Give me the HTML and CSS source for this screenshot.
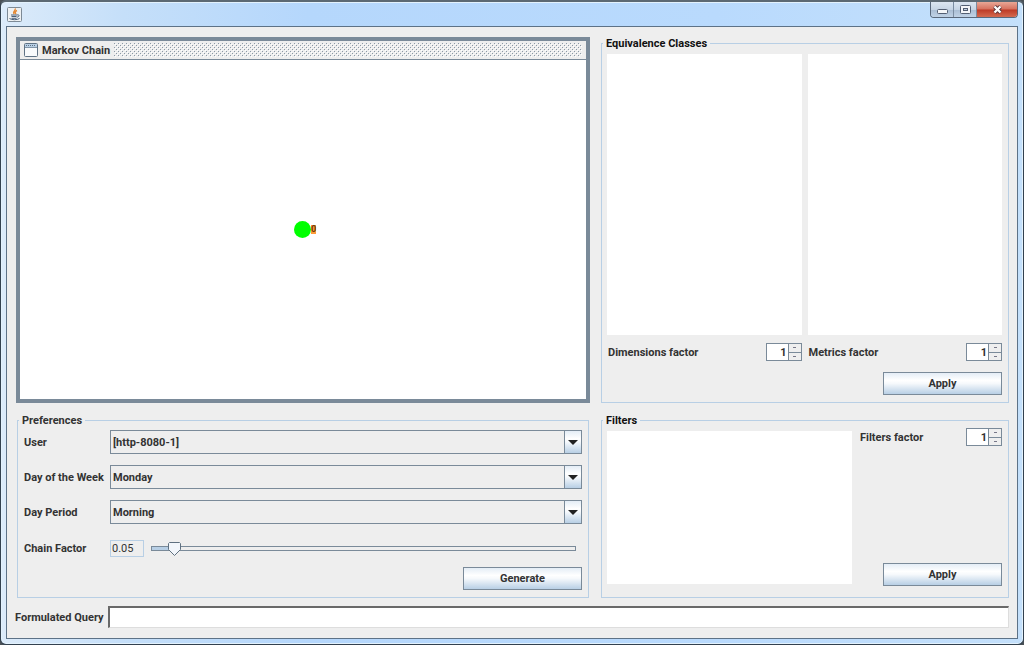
FILE: index.html
```html
<!DOCTYPE html>
<html lang="en">
<head>
<meta charset="utf-8">
<title>Markov Chain</title>
<link rel="stylesheet" href="styles.css">
</head>
<body>
<div class="window">
  <header class="titlebar">
    <svg class="java-icon" width="15" height="15" viewBox="0 0 15 15" aria-hidden="true">
      <rect x=".5" y=".5" width="14" height="14" rx="1" fill="#eef1f3" stroke="#7d8a96"/>
      <path d="M8 1.500c1.500 1.500-3 3-.8 5.500M10 3.500c-2.500 1.200-2 2.200-1 3.500" fill="none" stroke="#e58a35" stroke-width="1.400"/>
      <path d="M4 8h6M4.500 9.500h5" fill="none" stroke="#4c6078" stroke-width="1.200"/>
      <path d="M10 8c3-.8 2.500 2-.2 2.200M2.500 11.500c2 1.600 8 1.600 10 0M4.500 11.300h5" fill="none" stroke="#4c6078"/>
    </svg>
    <div class="window-buttons">
      <button class="win-btn" type="button" aria-label="Minimize"><svg class="minimize" width="11" height="5" viewBox="0 0 11 5"><rect x=".5" y=".5" width="10" height="4" rx="1" fill="#f4f6f9" stroke="#535f73"/></svg></button>
      <button class="win-btn" type="button" aria-label="Maximize"><svg width="11" height="9" viewBox="0 0 11 9"><rect x=".5" y=".5" width="10" height="8" rx="1" fill="#f4f6f9" stroke="#535f73"/><rect x="3.500" y="3.500" width="4" height="2" fill="#c3d0e0" stroke="#535f73"/></svg></button>
      <button class="win-btn win-close" type="button" aria-label="Close"><svg width="11" height="9" viewBox="0 0 11 9"><path d="M2.500 1.500l6 6M8.500 1.500l-6 6" stroke="#59353a" stroke-width="4"/><path d="M2.500 1.500l6 6M8.500 1.500l-6 6" stroke="#fff" stroke-width="2.300"/></svg></button>
    </div>
  </header>
  <main class="client">
    <div class="panels">
      <section class="chain">
        <div class="chain-title">
          <svg width="14" height="14" viewBox="0 0 14 14" aria-hidden="true"><rect x=".5" y=".5" width="13" height="13" rx="1" fill="#f8fafc" stroke="#5f7285"/><rect x="1" y="1" width="12" height="3" fill="#b8cfe5"/><path d="M2 2.500h10" stroke="#5f7285" stroke-dasharray="1 1"/><path d="M1 4.500h12" stroke="#8295a8"/></svg>
          <span>Markov Chain</span>
          <div class="grip"></div>
        </div>
        <div class="canvas"><div class="node"><span class="dot"></span><span class="node-label">0</span></div></div>
      </section>

      <fieldset class="group classes">
        <legend>Equivalence Classes</legend>
        <div class="class-columns">
          <div class="class-column">
            <div class="list"></div>
            <div class="factor">
              <label for="dim">Dimensions factor</label>
              <div class="spinner"><input id="dim" type="text" value="1"><div class="steps"><button type="button" aria-label="Increase"></button><button type="button" aria-label="Decrease"></button></div></div>
            </div>
          </div>
          <div class="class-column">
            <div class="list"></div>
            <div class="factor">
              <label for="met">Metrics factor</label>
              <div class="spinner"><input id="met" type="text" value="1"><div class="steps"><button type="button" aria-label="Increase"></button><button type="button" aria-label="Decrease"></button></div></div>
            </div>
          </div>
        </div>
        <button class="btn" type="button">Apply</button>
      </fieldset>

      <fieldset class="group prefs">
        <legend>Preferences</legend>
        <div class="pref-rows">
          <label for="user">User</label>
          <select id="user"><option>[http-8080-1]</option></select>
          <label for="day">Day of the Week</label>
          <select id="day"><option>Monday</option></select>
          <label for="period">Day Period</label>
          <select id="period"><option>Morning</option></select>
          <label for="chain">Chain Factor</label>
          <div class="chain-factor">
            <input class="value" type="text" value="0.05" readonly aria-label="Chain factor value">
            <input class="slider" id="chain" type="range" min="0" max="100" value="4">
          </div>
        </div>
        <button class="btn" type="button">Generate</button>
      </fieldset>

      <fieldset class="group filters">
        <legend>Filters</legend>
        <div class="filter-body">
          <div class="list"></div>
          <div class="filter-side">
            <div class="factor">
              <label for="fil">Filters factor</label>
              <div class="spinner"><input id="fil" type="text" value="1"><div class="steps"><button type="button" aria-label="Increase"></button><button type="button" aria-label="Decrease"></button></div></div>
            </div>
            <button class="btn" type="button">Apply</button>
          </div>
        </div>
      </fieldset>
    </div>
    <div class="query">
      <label for="query">Formulated Query</label>
      <input id="query" type="text">
    </div>
  </main>
</div>
</body>
</html>
```
FILE: styles.css
```css
* { box-sizing: border-box; }

body {
  margin: 0;
  background: #4a5157;
  font: bold 11px/13px Roboto, "Liberation Sans", Arial, sans-serif;
  color: #333;
}

button, input, select { font: inherit; color: inherit; border-radius: 0; }
label { white-space: nowrap; }

.window {
  display: flex;
  flex-direction: column;
  min-height: 100vh;
  padding: 0 5px 5px;
  border: 1px solid #33414f;
  border-top: 2px solid #5c6973;
  border-radius: 6px;
  background: linear-gradient(90deg, #dcebfa 0, #c5dff9 12%, #b5d7fc 30%, #b9dafd 70%, #c4e0fb 100%);
  box-shadow: inset 0 0 0 1px #e3f2fd;
}

.titlebar {
  display: flex;
  justify-content: space-between;
  align-items: flex-start;
  height: 24px;
  padding-left: 1px;
}
.java-icon { margin-top: 5px; }

.window-buttons {
  display: flex;
  border: 1px solid #59687b;
  border-top: 0;
  border-radius: 0 0 4px 4px;
  overflow: hidden;
}
.win-btn {
  display: flex;
  align-items: center;
  justify-content: center;
  width: 23px;
  height: 15px;
  padding: 0;
  border: 0;
  border-right: 1px solid #7b8da2;
  background: linear-gradient(#dce6f1 0, #c6d4e4 50%, #a9bdd3 51%, #c0d2e6 100%);
}
.minimize { margin-top: 4px; }
.win-close {
  width: 40px;
  border-right: 0;
  background: linear-gradient(#e9a796 0, #d6705d 48%, #bd3a26 52%, #d46a50 100%);
}

.client {
  flex: 1;
  display: flex;
  flex-direction: column;
  gap: 8px;
  padding: 10px 8px 10px;
  border: 1px solid #5d7287;
  background: #eee;
}

.panels {
  flex: 1;
  display: grid;
  grid-template-columns: minmax(0, 574fr) minmax(0, 408fr);
  grid-template-rows: minmax(0, 366fr) minmax(0, 184fr);
  gap: 11px;
  padding-left: 1px;
}

.chain {
  display: flex;
  flex-direction: column;
  border: 4px solid #7a8a99;
}
.chain-title {
  display: flex;
  align-items: center;
  gap: 4px;
  height: 19px;
  padding: 0 4px;
  border-bottom: 1px solid #7a8a99;
}
.grip {
  flex: 1;
  height: 14px;
  background: url("data:image/svg+xml,%3Csvg xmlns='http://www.w3.org/2000/svg' width='4' height='4'%3E%3Cpath d='M0 0h1v1h-1zM2 2h1v1h-1z' fill='%238c99a6'/%3E%3Cpath d='M1 1h1v1h-1zM3 3h1v1h-1z' fill='%23fff'/%3E%3C/svg%3E");
}
.canvas {
  flex: 1;
  display: flex;
  align-items: center;
  justify-content: center;
  background: #fff;
}
.node { display: flex; align-items: center; padding-left: 4px; }
.dot { width: 17px; height: 17px; border-radius: 50%; background: #0f0; }
.node-label {
  width: 5px;
  font-size: 9px;
  line-height: 9px;
  background: #ff9c38;
  color: #6b3a10;
}

.group {
  display: flex;
  flex-direction: column;
  min-width: 0;
  margin: 0;
  padding: 4px 6px 7px 5px;
  border: 1px solid #b8cfe5;
}
.group legend { margin-left: -4px; padding: 0 3px; color: #111; }
.list { background: #fff; }

.class-columns { flex: 1; display: flex; gap: 6px; }
.class-column { flex: 1; display: flex; flex-direction: column; gap: 8px; }
.class-column .list { flex: 1; }
.factor { display: flex; justify-content: space-between; align-items: center; }
.class-column .factor { padding-left: 1px; }

.spinner {
  display: flex;
  width: 36px;
  height: 18px;
  border: 1px solid #7a8a99;
}
.spinner input {
  flex: 1;
  min-width: 0;
  padding: 0 1px 0 0;
  border: 0;
  background: #fff;
  text-align: right;
}
.steps { display: flex; flex-direction: column; width: 13px; border-left: 1px solid #7a8a99; }
.steps button {
  flex: 1;
  display: flex;
  align-items: center;
  justify-content: center;
  padding: 0;
  border: 0;
  background: #eee;
}
.steps button + button { border-top: 1px solid #7a8a99; }
.steps button::before { content: ""; width: 3px; height: 1px; background: #778; }

.btn {
  align-self: flex-end;
  width: 119px;
  height: 23px;
  padding: 0;
  border: 1px solid #7a8a99;
  background: linear-gradient(#e4edf6 0, #fff 35%, #f6f9fc 50%, #b8cfe5 100%);
}
.classes .btn { margin-top: 11px; }

.prefs { margin: 0 1px; padding: 3px 6px 7px; justify-content: space-between; }
.prefs legend { margin-left: -5px; color: #333; }
.pref-rows {
  display: grid;
  grid-template-columns: 80px minmax(0, 1fr);
  column-gap: 6px;
  row-gap: 11px;
  align-items: center;
}
select {
  appearance: none;
  width: 100%;
  height: 24px;
  padding: 0 20px 0 2px;
  border: 1px solid #7a8a99;
  background:
    url("data:image/svg+xml,%3Csvg xmlns='http://www.w3.org/2000/svg' width='10' height='5'%3E%3Cpath d='M0 0h10l-5 5z' fill='%23222'/%3E%3C/svg%3E") right 3px center no-repeat,
    linear-gradient(#e4edf6 0, #fff 35%, #f6f9fc 50%, #b8cfe5 100%) right / 16px 100% no-repeat,
    linear-gradient(#7a8a99, #7a8a99) right / 17px 100% no-repeat,
    #eee;
}
.chain-factor { display: flex; align-items: center; gap: 7px; height: 26px; padding-right: 6px; }
.value {
  width: 34px;
  height: 17px;
  padding: 0 1px;
  border: 1px solid #b8cfe5;
  background: #eee;
  font-weight: normal;
}
.slider {
  appearance: none;
  flex: 1;
  min-width: 0;
  height: 15px;
  margin: 0;
  background: none;
}
.slider::-webkit-slider-runnable-track {
  height: 5px;
  border: 1px solid #7a8a99;
  background: linear-gradient(90deg, #b8cfe5 18px, #eee 18px);
}
.slider::-webkit-slider-thumb {
  appearance: none;
  width: 13px;
  height: 14px;
  margin-top: -5px;
  background: url("data:image/svg+xml,%3Csvg xmlns='http://www.w3.org/2000/svg' width='13' height='14'%3E%3Cpath d='M1.500 .5h10l1 1v6l-6 6-6-6v-6z' fill='%23f2f6fb' stroke='%235f7080'/%3E%3C/svg%3E");
}

.filters { padding: 0 6px 7px 5px; }
.filter-body { flex: 1; display: flex; gap: 8px; }
.filter-body > .list { flex: 245; margin: 4px 0 6px; }
.filter-side { flex: 142; display: flex; flex-direction: column; justify-content: space-between; margin: 1px 0 4px; }

.query { display: flex; align-items: center; gap: 4px; }
.query input {
  flex: 1;
  min-width: 0;
  height: 22px;
  padding: 0 3px;
  border: 1px solid #ddd;
  border-top: 2px solid #696969;
  border-left: 2px solid #696969;
  background: #fff;
}
```
